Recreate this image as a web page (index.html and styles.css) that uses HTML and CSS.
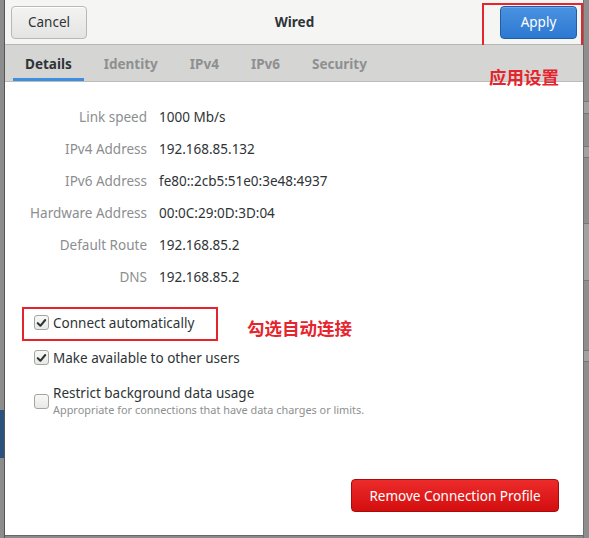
FILE: index.html
```html
<!DOCTYPE html>
<html>
<head>
<meta charset="utf-8">
<link rel="stylesheet" href="styles.css">
</head>
<body>
<div class="screen">
  <div class="bg-left">
    <div class="bg-sel"></div>
  </div>
  <div class="dialog">
    <header class="header">
      <button class="btn cancel">Cancel</button>
      <div class="title">Wired</div>
      <button class="btn apply">Apply</button>
      <div class="mark mark-apply"></div>
    </header>
    <nav class="tabs">
      <span class="tab active">Details</span>
      <span class="tab">Identity</span>
      <span class="tab">IPv4</span>
      <span class="tab">IPv6</span>
      <span class="tab">Security</span>
      <span class="note note-apply">应用设置</span>
    </nav>
    <main class="content">
      <div class="info">
        <div class="lbl">Link speed</div><div class="val">1000 Mb/s</div>
        <div class="lbl">IPv4 Address</div><div class="val">192.168.85.132</div>
        <div class="lbl">IPv6 Address</div><div class="val">fe80::2cb5:51e0:3e48:4937</div>
        <div class="lbl">Hardware Address</div><div class="val">00:0C:29:0D:3D:04</div>
        <div class="lbl">Default Route</div><div class="val">192.168.85.2</div>
        <div class="lbl">DNS</div><div class="val">192.168.85.2</div>
      </div>
      <div class="checks">
        <div class="check c1">
          <span class="box checked"><svg viewBox="0 0 14 14" width="14" height="14"><path d="M3 7.2 L5.8 10 L11 3.8" fill="none" stroke="#2e3436" stroke-width="2.2" stroke-linecap="round" stroke-linejoin="round"/></svg></span>
          <span class="ctext">Connect automatically</span>
          <div class="mark mark-auto"></div>
          <span class="note note-auto">勾选自动连接</span>
        </div>
        <div class="check c2">
          <span class="box checked"><svg viewBox="0 0 14 14" width="14" height="14"><path d="M3 7.2 L5.8 10 L11 3.8" fill="none" stroke="#2e3436" stroke-width="2.2" stroke-linecap="round" stroke-linejoin="round"/></svg></span>
          <span class="ctext">Make available to other users</span>
        </div>
        <div class="check c3">
          <span class="box"></span>
          <div class="cgroup">
            <span class="ctext">Restrict background data usage</span>
            <span class="csub">Appropriate for connections that have data charges or limits.</span>
          </div>
        </div>
      </div>
      <div class="footer">
        <button class="btn remove">Remove Connection Profile</button>
      </div>
    </main>
  </div>
  <div class="bg-right">
    <div class="band b1"></div>
    <div class="band b2"></div>
    <div class="band b3"></div>
    <div class="band b4"></div>
  </div>
</div>
</body>
</html>
```
FILE: styles.css
```css
* { box-sizing: border-box; }
html, body { margin: 0; padding: 0; }
body {
  width: 589px;
  height: 538px;
  overflow: hidden;
  background: #8a8a8a;
  font-family: "Noto Sans", "Open Sans", "Noto Sans CJK SC", sans-serif;
  color: #2e3436;
}
.screen {
  display: flex;
  width: 589px;
  height: 538px;
}
.bg-left {
  position: relative;
  width: 5px;
  height: 538px;
  background: #8c8c8c;
  border-right: 1px solid #555;
  overflow: hidden;
  flex: none;
}
.bg-sel {
  position: absolute;
  left: 0;
  top: 410px;
  width: 4px;
  height: 48px;
  background: #2b527d;
}
.dialog {
  width: 578px;
  height: 536px;
  background: #fff;
  display: flex;
  flex-direction: column;
  flex: none;
  border-bottom: 1px solid #666;
}
.bg-right {
  flex: 1;
  height: 538px;
  background: #8e8e8e;
  border-left: 1px solid #6e6e6e;
  position: relative;
}
.band { position: absolute; left: 0; right: 0; background: #a2a2a2; border-top: 1px solid #777; border-bottom: 1px solid #777; }
.b1 { top: 101px; height: 13px; }
.b2 { top: 146px; height: 12px; }
.b3 { top: 223px; height: 58px; }
.b4 { top: 350px; height: 12px; }

.header {
  position: relative;
  height: 45px;
  background: #f5f5f4;
  border-bottom: 1px solid #b6b6b3;
  display: flex;
  align-items: center;
  padding: 0 6px 0 6px;
  flex: none;
}
.btn {
  font-family: inherit;
  font-size: 13.5px;
  border-radius: 4px;
  height: 33px;
  padding: 0 12px;
  cursor: default;
}
.cancel {
  width: 76px;
  color: #2e3436;
  background: linear-gradient(#f3f3f2, #e4e4e2);
  border: 1px solid #b8b8b5;
  box-shadow: inset 0 1px #fff;
}
.title {
  flex: 1;
  text-align: center;
  font-size: 13.5px;
  font-weight: bold;
  color: #2e3436;
  padding-left: 2px;
  padding-bottom: 1px;
}
.apply {
  width: 77px;
  color: #fff;
  background: linear-gradient(#4a92e0, #2d78d2);
  border: 1px solid #1f5ea5;
  box-shadow: inset 0 1px rgba(255,255,255,0.2);
}
.mark {
  position: absolute;
  border: 2px solid #e5242d;
}
.mark-apply {
  left: 477px;
  top: 3px;
  width: 101px;
  height: 45px;
}

.tabs {
  position: relative;
  height: 37px;
  background: #d5d5d3;
  border-bottom: 1px solid #bcbcb9;
  display: flex;
  align-items: stretch;
  padding-left: 8px;
  flex: none;
}
.tab {
  display: flex;
  align-items: center;
  justify-content: center;
  padding: 0 12px;
  margin-right: 8px;
  font-size: 13.5px;
  font-weight: bold;
  color: #8d9091;
  border-bottom: 3px solid transparent;
  padding-top: 4px;
}
.tab.active {
  color: #2e3436;
  border-bottom-color: #3d8ee0;
}
.note {
  position: absolute;
  color: #e5242d;
  font-weight: bold;
  font-size: 17.5px;
  font-family: "Noto Sans CJK SC", sans-serif;
  white-space: nowrap;
}
.note-apply { left: 484px; top: 19px; }

.content {
  flex: 1;
  display: flex;
  flex-direction: column;
  position: relative;
}
.info {
  display: grid;
  grid-template-columns: 142px auto;
  column-gap: 12px;
  padding-top: 25px;
  font-size: 13.5px;
}
.lbl {
  text-align: right;
  color: #8b8e8f;
  height: 32px;
  line-height: 20px;
}
.val {
  color: #2e3436;
  height: 32px;
  line-height: 20px;
}
.checks {
  padding-left: 29px;
  margin-top: 15px;
  font-size: 13.5px;
}
.check {
  position: relative;
  display: flex;
  align-items: flex-start;
}
.c1 { height: 35px; }
.c2 { height: 35px; }
.box {
  width: 15px;
  height: 15px;
  border: 1px solid #a5a5a2;
  border-radius: 3px;
  background: linear-gradient(#f8f8f7, #e8e8e7);
  margin-top: 1px;
  margin-right: 4px;
  flex: none;
  display: flex;
  align-items: center;
  justify-content: center;
}
.box svg { display: block; }
.c3 .box { margin-top: 10px; }
.ctext { line-height: 18px; }
.cgroup { display: flex; flex-direction: column; }
.csub {
  font-size: 10.9px;
  color: #8d9091;
  line-height: 15px;
}
.mark-auto {
  left: -12px;
  top: -7px;
  width: 196px;
  height: 34px;
}
.note-auto {
  left: 213px;
  top: 1px;
}
.footer {
  flex: 1;
  display: flex;
  justify-content: flex-end;
  align-items: flex-end;
  padding: 0 24px 23px 0;
}
.remove {
  width: 208px;
  color: #fff;
  background: linear-gradient(#ee2b2b, #d20e0e);
  border: 1px solid #a80b0b;
  padding: 0;
}
```
